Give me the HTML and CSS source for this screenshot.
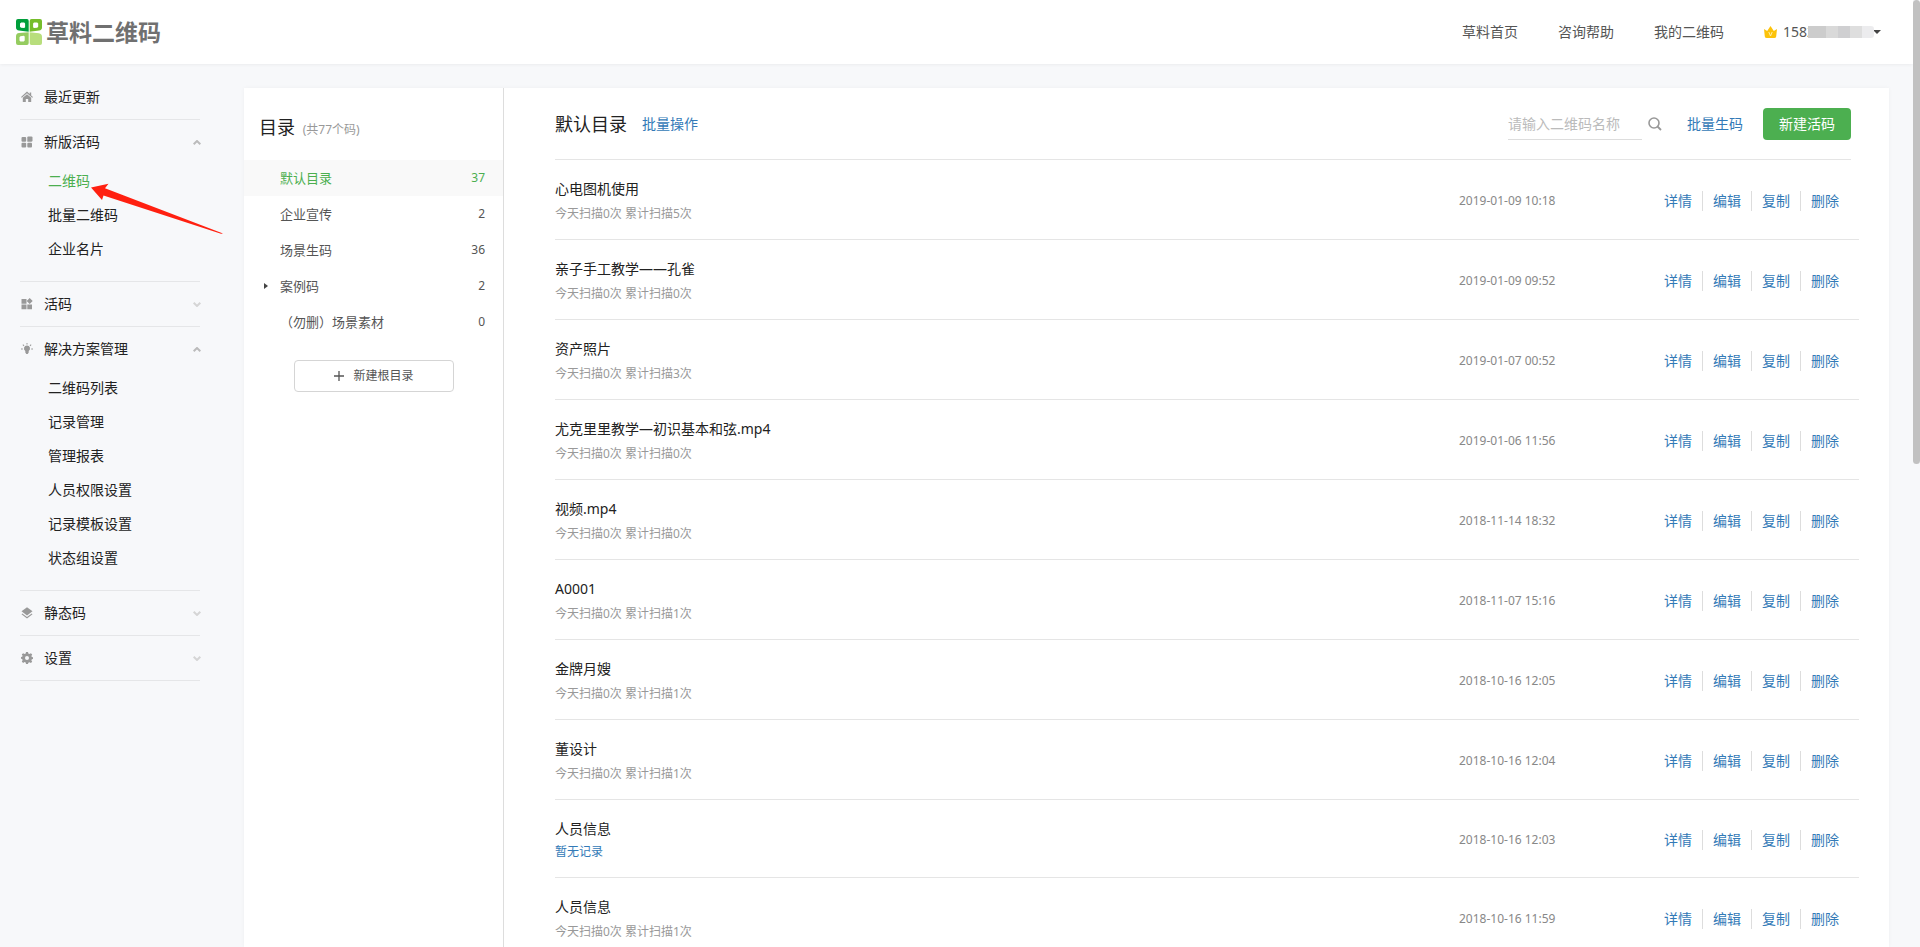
FILE: index.html
```html
<!DOCTYPE html>
<html lang="zh-CN">
<head>
<meta charset="utf-8">
<title>草料二维码</title>
<link rel="stylesheet" href="styles.css">
</head>
<body>
<header class="header">
  <a class="logo" href="#">
    <svg width="26" height="26" viewBox="0 0 26 26" aria-hidden="true">
      <path fill="#009e3b" fill-rule="evenodd" d="M2 0h9q1.700 0 1.700 2v10.800L3 11.500Q0 11 0 8.500V2Q0 0 2 0zM5.200 3.600L4 4.600v3.200l1 1 3.200.3.900-.9V4.500L8.200 3.600z"/>
      <path fill="#76bd2b" fill-rule="evenodd" d="M15.500 0H24q2 0 2 2v6.500q0 2.500-3 3l-9.300 1.300V2q0-2 1.800-2zM18 3.600l-.9.900v3.700l.9.900 3.200-.3 1-1V4.500l-1-.9z"/>
      <path fill="#95cc60" fill-rule="evenodd" d="M12.700 13.200V24q0 2-1.700 2H2q-2 0-2-2v-6.500q0-3 3-3.400zM4.400 17.300l-.9 1v3.200l.9.900h3.400l.9-.9v-4.100l-.9-.6z"/>
      <path fill="#b8de7c" d="M13.700 13.200l9.300 1q3 .5 3 3.500V24q0 2-2 2h-8.500q-1.800 0-1.800-2z"/>
    </svg>
    <span>草料二维码</span>
  </a>
  <nav class="topnav">
    <a href="#">草料首页</a>
    <a href="#">咨询帮助</a>
    <a href="#">我的二维码</a>
    <button class="user" type="button">
      <svg width="13" height="12" viewBox="0 0 13 12" aria-hidden="true"><path fill="#fcc30b" d="M0 3l3.200 2L6.500 0l3.300 5L13 3l-.8 7.500Q12 12 10.200 12H2.800Q1 12 .8 10.500z"/><path d="M4.800 6l1.700 4 1.700-4" fill="none" stroke="#fff0a8"/></svg>
      <span>1582</span>
      <i class="mask"></i>
      <i class="caret"></i>
    </button>
  </nav>
</header>

<div class="page">
  <aside class="sidebar">
    <section class="group"><a class="group-head" href="#"><svg class="gi" viewBox="0 0 12 12"><path d="M6 .6L0 6l.8.700L6 2.200l5.200 4.500.8-.7-1.800-1.600V1.500H8.700V3z"/><path d="M6 3.200L1.800 6.800V11h3V8h2.400v3h3V6.800z"/></svg>最近更新</a></section>
    <section class="group"><a class="group-head" href="#"><svg class="gi" viewBox="0 0 12 12"><rect x=".5" y="1" width="4.700" height="4.700" rx="1"/><path d="M6.300 1.500q0-1 1-1h3q1.200 0 1.200 1v2.700q0 1.500-1.500 1.500H6.300z"/><rect x=".5" y="6.800" width="4.700" height="4.700" rx="1"/><rect x="6.300" y="6.800" width="4.700" height="4.700" rx="1"/></svg>新版活码<svg class="chev up" viewBox="0 0 8 5"><path d="M.7 4.200L4 1l3.300 3.200"/></svg></a>
      <ul class="sub"><li><a class="on" href="#">二维码</a></li><li><a href="#">批量二维码</a></li><li><a href="#">企业名片</a></li></ul></section>
    <section class="group"><a class="group-head" href="#"><svg class="gi" viewBox="0 0 12 12"><path d="M.5 1h5v4.700h-5zM8.700 0l3 3-3 3-3-3zM.5 6.500h5v4.700h-5zM6.300 6.500H11v4.700H6.300z"/></svg>活码<svg class="chev" viewBox="0 0 8 5"><path d="M.7.800L4 4 7.300.800"/></svg></a></section>
    <section class="group"><a class="group-head" href="#"><svg class="gi" viewBox="0 0 12 12"><path d="M6 2.500a3 3 0 0 0-1.700 5.500v1.500l1 1.500h1.400l1-1.500V8A3 3 0 0 0 6 2.500zM5.500 0h1v1.500h-1zM0 5.500h1.800v1H0zM10.200 5.500H12v1h-1.800zM1.500 2l.7-.7 1.200 1.200-.7.7zM9.800 1.300l.7.700-1.200 1.200-.7-.7z"/></svg>解决方案管理<svg class="chev up" viewBox="0 0 8 5"><path d="M.7 4.200L4 1l3.300 3.200"/></svg></a>
      <ul class="sub"><li><a href="#">二维码列表</a></li><li><a href="#">记录管理</a></li><li><a href="#">管理报表</a></li><li><a href="#">人员权限设置</a></li><li><a href="#">记录模板设置</a></li><li><a href="#">状态组设置</a></li></ul></section>
    <section class="group"><a class="group-head" href="#"><svg class="gi" viewBox="0 0 12 12"><path d="M6 .3l5.500 4L6 8.500.5 4.300z"/><path d="M1.300 6.500L6 10l4.700-3.500.8.700L6 11.500.5 7.200z"/></svg>静态码<svg class="chev" viewBox="0 0 8 5"><path d="M.7.800L4 4 7.300.800"/></svg></a></section>
    <section class="group"><a class="group-head" href="#"><svg class="gi" viewBox="0 0 12 12"><path fill-rule="evenodd" d="M5 0h2l.3 1.600 1.200.5L9.900 1.200l1.300 1.300-.8 1.500.4 1 1.200.2v1.800l-1.200.3-.4 1.200.8 1.300-1.300 1.300-1.400-.8-1.200.5L7 12H5l-.3-1.400-1.200-.5-1.400.8L.8 9.600l.8-1.300-.4-1.200L0 6.800V5l1.200-.2.400-1L.8 2.500l1.300-1.300 1.400.9 1.200-.5zM6 4a2 2 0 1 0 0 4 2 2 0 0 0 0-4z"/></svg>设置<svg class="chev" viewBox="0 0 8 5"><path d="M.7.800L4 4 7.300.800"/></svg></a></section>
    <svg class="pointer" width="136" height="54" viewBox="0 0 136 54" aria-hidden="true"><path fill="#ff2010" d="M2 5.500L19.500 1.800l-3.500 4.500L134 51.500l-2 .2L14.500 13.500 13 18z"/></svg>
  </aside>

  <main class="panel">
    <section class="dirs">
      <h2>目录 <small>(共77个码)</small></h2>
      <ul>
        <li class="on"><a href="#">默认目录</a><span>37</span></li>
        <li><a href="#">企业宣传</a><span>2</span></li>
        <li><a href="#">场景生码</a><span>36</span></li>
        <li><i class="tri"></i><a href="#">案例码</a><span>2</span></li>
        <li><a href="#">（勿删）场景素材</a><span>0</span></li>
      </ul>
      <button class="add" type="button"><svg width="10" height="10" viewBox="0 0 10 10" aria-hidden="true"><path d="M5 0v10M0 5h10" stroke="#555" stroke-width="1.300"/></svg>新建根目录</button>
    </section>

    <section class="content">
      <div class="toolbar">
        <h1>默认目录</h1><a class="batch" href="#">批量操作</a>
        <form class="search"><input type="text" aria-label="二维码名称" placeholder="请输入二维码名称"><button type="button" aria-label="搜索"><svg width="14" height="14" viewBox="0 0 14 14"><circle cx="6" cy="6" r="5" fill="none" stroke="#999" stroke-width="1.600"/><path d="M9.500 9.500l3.500 3.500" stroke="#999" stroke-width="1.800"/></svg></button></form>
        <a class="gen" href="#">批量生码</a>
        <button class="create" type="button">新建活码</button>
      </div>
      <ul class="codes">
        <li><div class="info"><h3>心电图机使用</h3><p>今天扫描0次 累计扫描5次</p></div><time>2019-01-09 10:18</time><div class="acts"><a href="#">详情</a><a href="#">编辑</a><a href="#">复制</a><a href="#">删除</a></div></li>
        <li><div class="info"><h3>亲子手工教学——孔雀</h3><p>今天扫描0次 累计扫描0次</p></div><time>2019-01-09 09:52</time><div class="acts"><a href="#">详情</a><a href="#">编辑</a><a href="#">复制</a><a href="#">删除</a></div></li>
        <li><div class="info"><h3>资产照片</h3><p>今天扫描0次 累计扫描3次</p></div><time>2019-01-07 00:52</time><div class="acts"><a href="#">详情</a><a href="#">编辑</a><a href="#">复制</a><a href="#">删除</a></div></li>
        <li><div class="info"><h3>尤克里里教学—初识基本和弦.mp4</h3><p>今天扫描0次 累计扫描0次</p></div><time>2019-01-06 11:56</time><div class="acts"><a href="#">详情</a><a href="#">编辑</a><a href="#">复制</a><a href="#">删除</a></div></li>
        <li><div class="info"><h3>视频.mp4</h3><p>今天扫描0次 累计扫描0次</p></div><time>2018-11-14 18:32</time><div class="acts"><a href="#">详情</a><a href="#">编辑</a><a href="#">复制</a><a href="#">删除</a></div></li>
        <li><div class="info"><h3>A0001</h3><p>今天扫描0次 累计扫描1次</p></div><time>2018-11-07 15:16</time><div class="acts"><a href="#">详情</a><a href="#">编辑</a><a href="#">复制</a><a href="#">删除</a></div></li>
        <li><div class="info"><h3>金牌月嫂</h3><p>今天扫描0次 累计扫描1次</p></div><time>2018-10-16 12:05</time><div class="acts"><a href="#">详情</a><a href="#">编辑</a><a href="#">复制</a><a href="#">删除</a></div></li>
        <li><div class="info"><h3>董设计</h3><p>今天扫描0次 累计扫描1次</p></div><time>2018-10-16 12:04</time><div class="acts"><a href="#">详情</a><a href="#">编辑</a><a href="#">复制</a><a href="#">删除</a></div></li>
        <li><div class="info"><h3>人员信息</h3><a class="none" href="#">暂无记录</a></div><time>2018-10-16 12:03</time><div class="acts"><a href="#">详情</a><a href="#">编辑</a><a href="#">复制</a><a href="#">删除</a></div></li>
        <li><div class="info"><h3>人员信息</h3><p>今天扫描0次 累计扫描1次</p></div><time>2018-10-16 11:59</time><div class="acts"><a href="#">详情</a><a href="#">编辑</a><a href="#">复制</a><a href="#">删除</a></div></li>
      </ul>
    </section>
  </main>
</div>
<div class="scrollbar"><i></i></div>
</body>
</html>
```
FILE: styles.css
```css
* { box-sizing: border-box; }
body, h1, h2, h3, p, ul { margin: 0; padding: 0; }
ul { list-style: none; }
body {
  height: 100vh;
  overflow: hidden;
  display: flex;
  flex-direction: column;
  padding-right: 7px;
  background: #f7f8fa;
  color: #222;
  font: 14px/20px "Noto Sans", "Noto Sans CJK SC", sans-serif;
}
a { color: #337ab7; text-decoration: none; }
button, input { font: inherit; border: 0; background: none; padding: 0; }
h1, h2, h3 { font-weight: 400; }

.header {
  flex: none;
  height: 64px;
  display: flex;
  align-items: center;
  justify-content: space-between;
  padding: 0 32px 0 16px;
  background: #fff;
  box-shadow: 0 0 4px rgba(0, 0, 0, .08);
}
.logo { display: flex; align-items: center; gap: 4px; color: #707070; font-size: 23px; font-weight: 700; line-height: 26px; }
.topnav { display: flex; align-items: center; gap: 40px; }
.topnav a, .user { color: #555; }
.user { display: flex; align-items: center; }
.user span { margin-left: 6px; }
.mask { position: relative; width: 66px; height: 12px; margin-left: -7px; background: linear-gradient(90deg, #ccc 0 18px, #d9d9d9 18px 30px, #cfcfd1 30px 42px, #dedede 42px 54px, #ececee 54px); border-radius: 0 3px 3px 0; }
.caret { border: 4px solid transparent; border-top-color: #444; border-bottom: 0; margin-left: -1px; }

.page { flex: 1; min-height: 0; display: flex; padding-right: 24px; }
.sidebar { position: relative; flex: none; width: 220px; padding: 11px 20px 0; }
.group { border-bottom: 1px solid #e5e6e8; }
.group-head { display: flex; align-items: center; height: 44px; color: #222; }
.gi { width: 12px; height: 12px; margin: 0 11px 0 1px; fill: #999; }
.chev { width: 8px; height: 5px; margin: 0 -1px 0 auto; fill: none; stroke: #d5d5d5; stroke-width: 2; }
.chev.up { stroke: #bbb; }
.sub { padding: 0 0 15px 28px; }
.sub a { display: block; line-height: 34px; color: #222; }
.sub .on { color: #4caf50; }
.pointer { position: absolute; left: 89px; top: 118px; }

.panel { flex: 1; min-width: 0; display: flex; margin: 24px 0 0 24px; background: #fff; box-shadow: 0 0 4px rgba(0, 0, 0, .04); }
.dirs { flex: none; width: 260px; border-right: 1px solid #ddd; color: #555; }
.dirs h2 { padding: 26px 15px 20px; font-size: 18px; line-height: 26px; color: #222; }
.dirs small { margin-left: 3px; font-size: 12px; line-height: 12px; color: #999; }
.dirs li { position: relative; display: flex; justify-content: space-between; height: 36px; line-height: 36px; padding: 0 18px 0 36px; font-size: 13px; }
.dirs li a { color: #555; }
.dirs li.on { background: #f9f9f9; }
.dirs li.on, .dirs li.on a { color: #4caf50; }
.dirs li span { font-size: 12px; }
.tri { position: absolute; left: 20px; top: 15px; border: 3px solid transparent; border-left: 4px solid #444; border-right: 0; }
.add { display: flex; align-items: center; justify-content: center; gap: 9px; width: 160px; height: 32px; margin: 20px 0 0 50px; border: 1px solid #d5d5d5; border-radius: 4px; color: #555; font-size: 12px; }

.content { flex: 1; min-width: 0; padding: 0 30px 0 51px; }
.toolbar { display: flex; align-items: center; height: 72px; margin-right: 8px; border-bottom: 1px solid #e5e5e5; }
.toolbar h1 { font-size: 18px; line-height: 26px; }
.batch { margin-left: 15px; }
.search { display: flex; align-items: center; margin-left: auto; }
.search input { width: 134px; height: 32px; border-bottom: 1px solid #ddd; outline: 0; }
.search input::placeholder { color: #bbb; opacity: 1; }
.search button { display: flex; margin-left: 6px; }
.gen { margin: 0 20px 0 25px; }
.create { width: 88px; height: 32px; border-radius: 4px; background: #4caf50; color: #fff; }

.codes li { display: flex; align-items: center; border-bottom: 1px solid #e5e5e5; padding: 19px 20px 16px 0; }
.info { flex: 1; min-width: 0; }
.codes h3 { font-size: 14px; line-height: 20px; }
.codes p { margin-top: 6px; font-size: 12px; line-height: 18px; color: #999; }
.none { display: block; margin-top: 4px; font-size: 12px; line-height: 18px; }
.codes time { width: 205px; font-size: 12px; color: #888; }
.acts { display: flex; }
.acts a { padding: 0 10px; border-left: 1px solid #ddd; }
.acts a:first-child { padding-left: 0; border: 0; }
.acts a:last-child { padding-right: 0; }

.scrollbar { position: fixed; top: 0; right: 0; bottom: 0; width: 7px; }
.scrollbar i { display: block; height: 49%; background: #c1c1c1; border-radius: 4px; }
```
